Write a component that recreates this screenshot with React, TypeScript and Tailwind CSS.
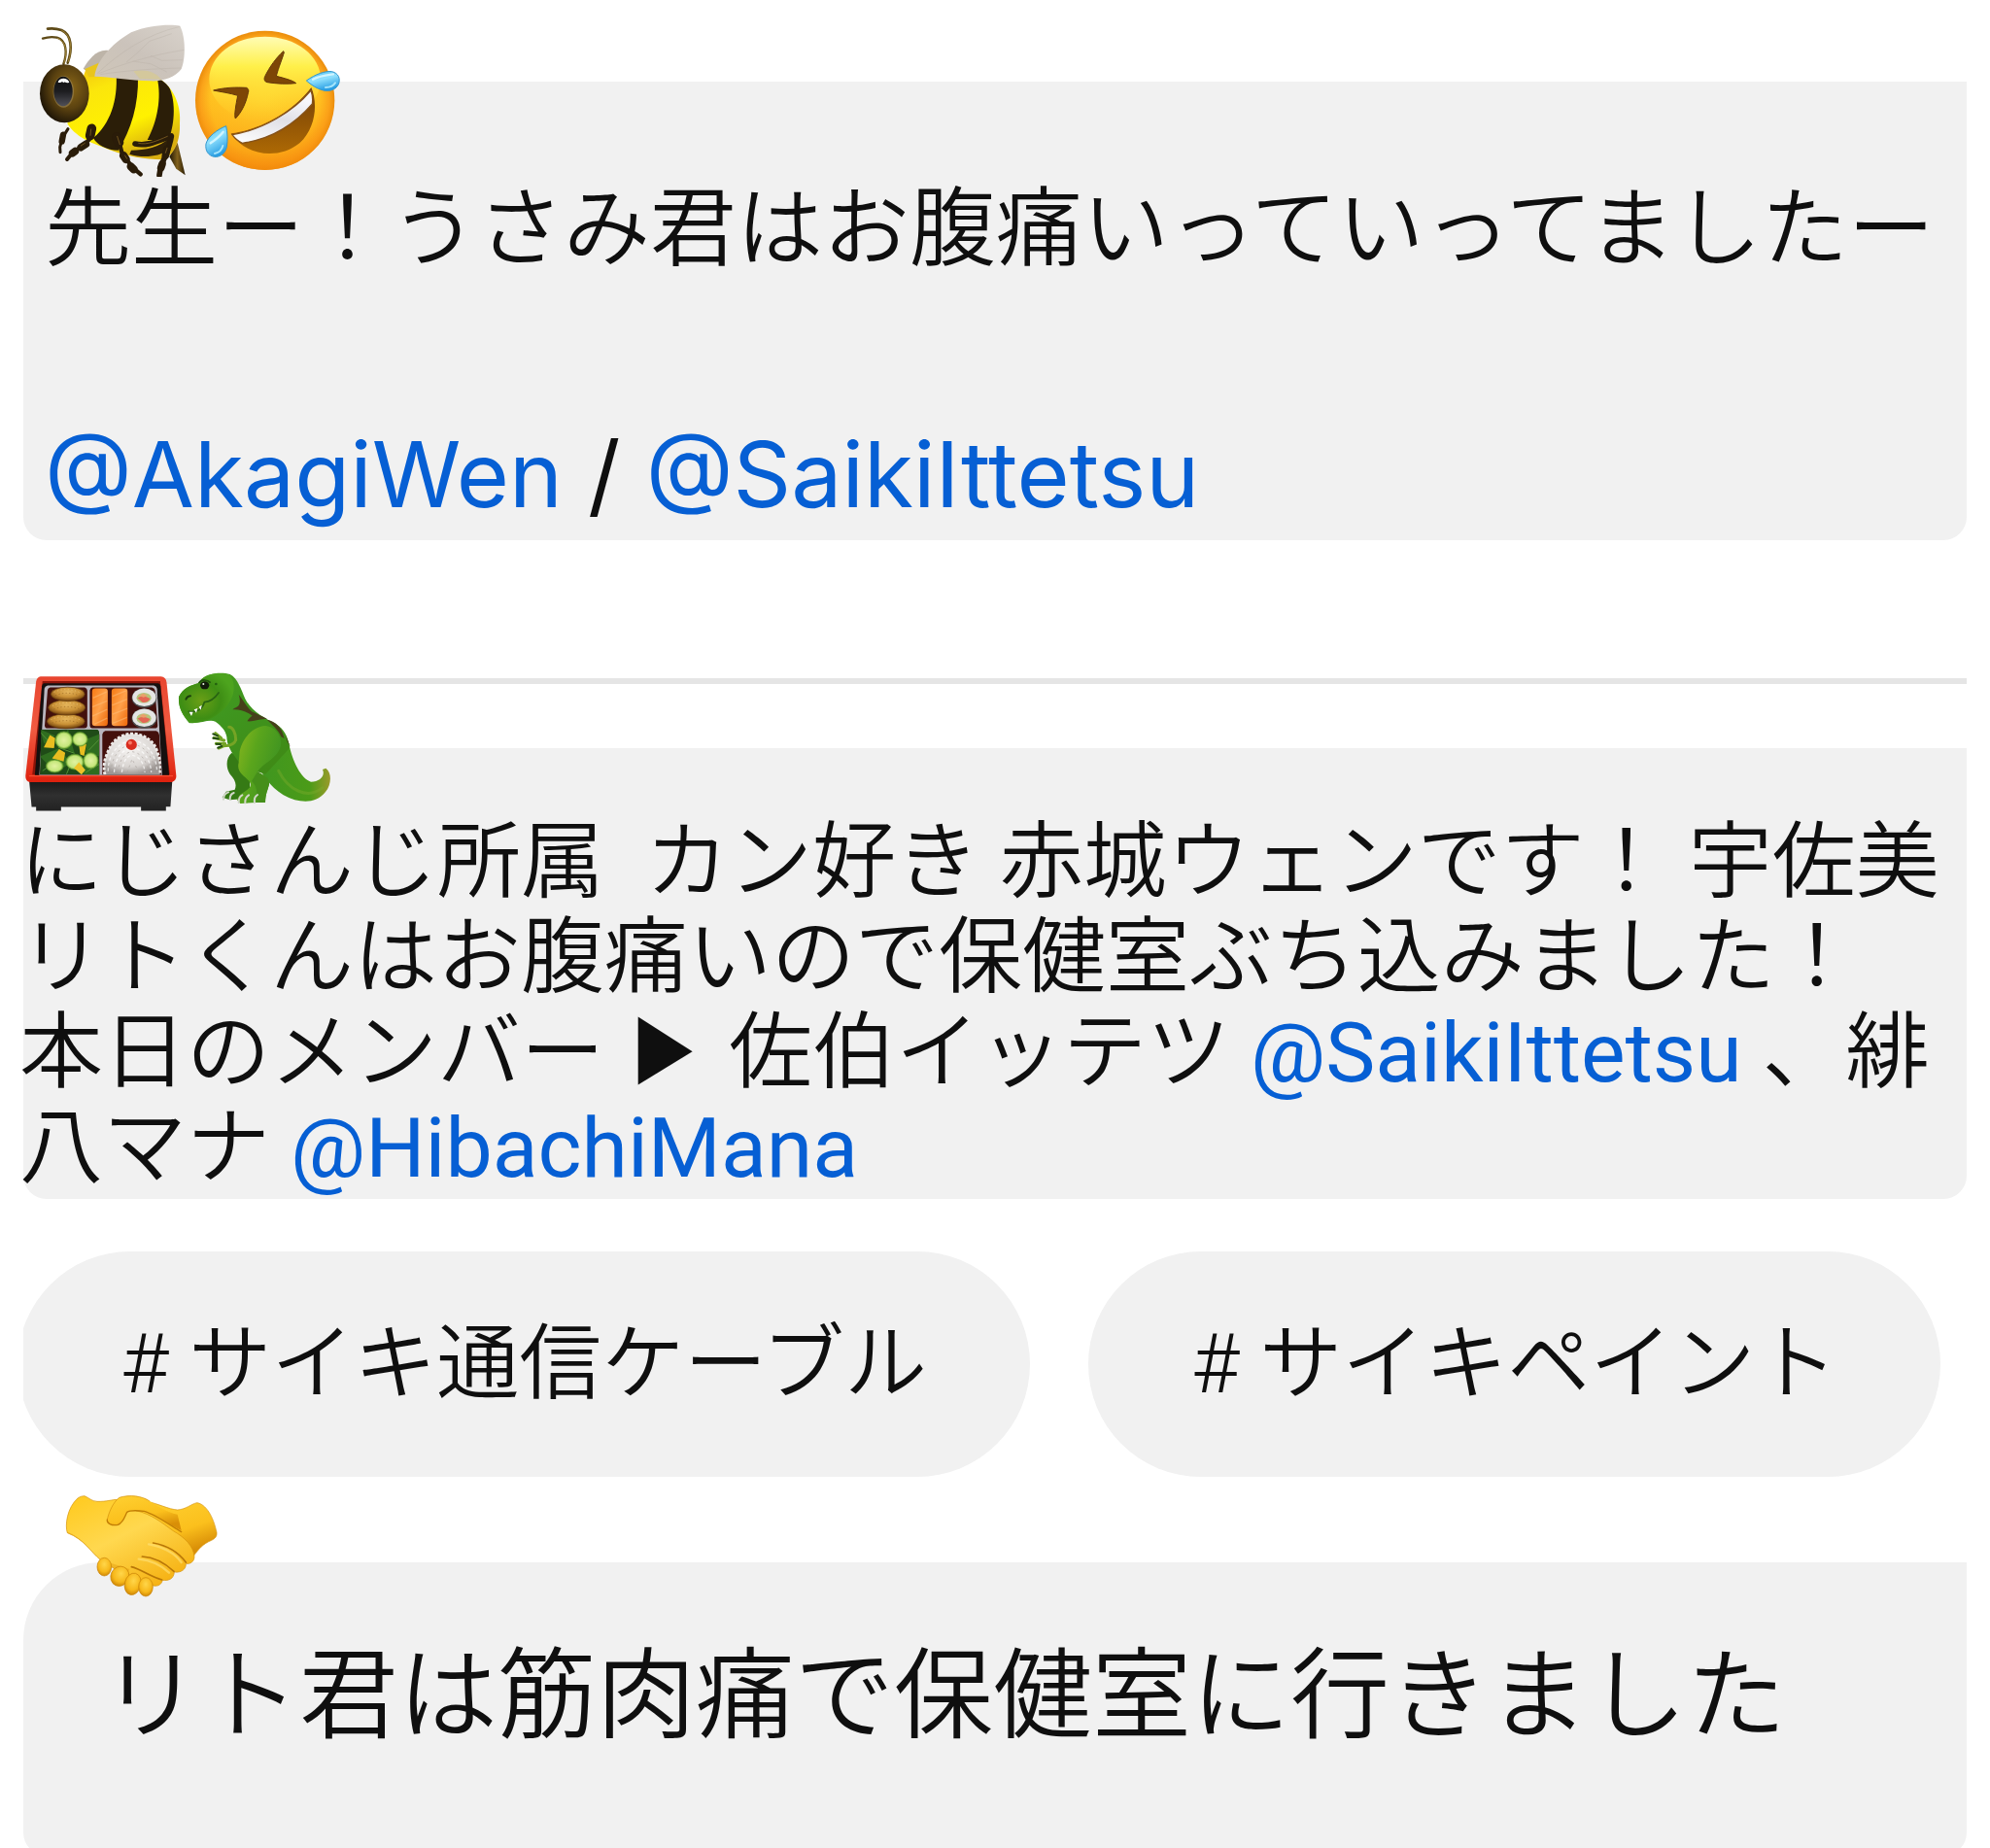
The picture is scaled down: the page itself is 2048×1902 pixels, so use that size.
import type { ReactNode } from "react";
import { clsx } from "clsx";

function BeeIcon({ className }: { className?: string }) {
  return (
    <svg viewBox="60 40 459 474" className={className} role="img" aria-label="ミツバチ">
      <defs>
        <radialGradient id="bee-head" cx="0.6" cy="0.4" r="0.65">
          <stop offset="0" stopColor="#8a6717" />
          <stop offset="0.55" stopColor="#5b4210" />
          <stop offset="1" stopColor="#1a1206" />
        </radialGradient>
        <linearGradient id="bee-body" x1="0" y1="0" x2="0.5" y2="1">
          <stop offset="0" stopColor="#f0bd10" />
          <stop offset="0.3" stopColor="#fbe60c" />
          <stop offset="0.7" stopColor="#fff200" />
          <stop offset="1" stopColor="#d9ae10" />
        </linearGradient>
        <linearGradient id="bee-wing" x1="0" y1="1" x2="1" y2="0">
          <stop offset="0" stopColor="#cfc6b8" />
          <stop offset="0.5" stopColor="#cbc3bb" />
          <stop offset="1" stopColor="#d8d2cb" />
        </linearGradient>
        <linearGradient id="bee-eye" x1="0" y1="0" x2="0" y2="1">
          <stop offset="0" stopColor="#101010" />
          <stop offset="0.5" stopColor="#1d1d20" />
          <stop offset="1" stopColor="#505058" />
        </linearGradient>
        <linearGradient id="bee-sting" x1="0" y1="0" x2="1" y2="0">
          <stop offset="0" stopColor="#1f1605" />
          <stop offset="0.5" stopColor="#80601c" />
          <stop offset="1" stopColor="#2b1e07" />
        </linearGradient>
        <clipPath id="bee-clip">
          <path d="M205 182C250 160 380 190 440 216C480 245 500 300 495 350C497 400 480 450 440 461C390 460 330 450 285 433C235 412 180 400 148 350Z" />
        </clipPath>
      </defs>
      <path d="M463 452L488 408L512 509L484 489Z" fill="url(#bee-sting)" />
      <path d="M205 182C250 160 380 190 440 216C480 245 500 300 495 350C497 400 480 450 440 461C390 460 330 450 285 433C235 412 180 400 148 350Z" fill="url(#bee-body)" />
      <g clipPath="url(#bee-clip)">
        <path d="M299 195L366 205C368 290 345 370 305 432C270 432 240 416 228 394C280 350 304 280 299 195Z" fill="#2b1e08" />
        <path d="M425 208L450 218C485 260 480 340 466 384C440 400 420 400 395 400C425 345 440 270 425 208Z" fill="#2b1e08" />
        <path d="M345 432C390 432 430 425 466 392L458 430C430 455 375 455 340 444Z" fill="#30210a" />
      </g>
      <path d="M197 180C215 150 240 118 275 124L300 175L230 205Z" fill="#bdb4a8" />
      <path d="M202 181L245 162L236 205L214 206Z" fill="#e9c51b" />
      <path d="M232 204C237 160 280 105 345 68C400 44 470 42 496 48C514 85 513 150 500 181C482 207 440 220 405 218C340 216 280 205 232 204Z" fill="url(#bee-wing)" />
      <path d="M352 188C390 180 420 190 438 213L372 212Z" fill="#d9cb88" opacity="0.6" />
      <g fill="none" stroke="#b0a79d" strokeWidth="2" opacity="0.4">
        <path d="M240 195C310 130 390 75 495 50" />
        <path d="M245 195C320 165 400 140 508 122" />
        <path d="M250 198C330 185 420 180 498 178" />
        <path d="M330 160L360 135L402 95L470 72M350 157L405 165L455 190M405 140L440 155L503 153" />
      </g>
      <g fill="none" strokeLinecap="round">
        <path d="M136 166C148 132 146 92 116 84C98 80 84 83 72 87" stroke="#5e4a17" strokeWidth="7" />
        <path d="M149 162C164 118 162 75 130 61C115 56 101 55 87 57" stroke="#5e4a17" strokeWidth="8" />
        <path d="M138 162C148 130 146 96 118 86M151 158C165 116 160 76 131 62" stroke="#a98b3a" strokeWidth="2.5" />
      </g>
      <ellipse cx="139" cy="257" rx="76" ry="90" fill="url(#bee-head)" />
      <ellipse cx="136" cy="251" rx="32" ry="49" fill="#9a8350" opacity="0.65" />
      <ellipse cx="135" cy="250" rx="29" ry="46" fill="url(#bee-eye)" />
      <path d="M119 222C122 207 149 206 154 222C143 227 139 218 136 224C132 216 127 227 119 222Z" fill="#fff" />
      <g fill="none" stroke="#2a1c09" strokeLinecap="round" strokeLinejoin="round">
        <path d="M150 366L133 393L125 422L126 438" strokeWidth="9" />
        <path d="M135 384L131 405" strokeWidth="19" />
        <path d="M228 373C221 403 197 417 165 438L147 460" strokeWidth="12" />
        <path d="M223 365L218 387" strokeWidth="29" />
        <path d="M205 413L190 423M172 435L164 441" strokeWidth="23" />
        <path d="M305 397L318 445L350 485L374 506" strokeWidth="13" />
        <path d="M300 391L307 408" strokeWidth="30" />
        <path d="M321 448L329 460M344 482L353 491" strokeWidth="25" />
        <path d="M357 412C395 420 422 405 469 388C464 425 446 457 436 485L432 509" strokeWidth="17" />
        <path d="M455 429L451 448M441 474L437 486" strokeWidth="23" />
      </g>
      <g fill="none" stroke="#806023" strokeWidth="3" strokeLinecap="round" opacity="0.8">
        <path d="M221 367L219 386M302 389L310 414M368 410C395 417 426 402 457 389M326 448L332 458M202 410L190 418M456 425L451 440" />
      </g>
    </svg>
  );
}

function RoflIcon({ className }: { className?: string }) {
  return (
    <svg viewBox="540 60 459 441" className={className} role="img" aria-label="大笑い">
      <defs>
        <radialGradient id="rofl-face" cx="0.5" cy="0.5" r="0.5">
          <stop offset="0" stopColor="#ffd52e" />
          <stop offset="0.78" stopColor="#ffc321" />
          <stop offset="0.92" stopColor="#fba41a" />
          <stop offset="1" stopColor="#ea8c0b" />
        </radialGradient>
        <linearGradient id="rofl-shine" x1="0" y1="0" x2="0" y2="1">
          <stop offset="0" stopColor="#fffcb5" />
          <stop offset="0.35" stopColor="#fff04a" />
          <stop offset="1" stopColor="#ffd42c" stopOpacity="0" />
        </linearGradient>
        <linearGradient id="rofl-low" x1="0" y1="0" x2="0" y2="1">
          <stop offset="0.45" stopColor="#ff9b13" stopOpacity="0" />
          <stop offset="1" stopColor="#f58a0b" stopOpacity="0.75" />
        </linearGradient>
        <linearGradient id="rofl-mouth" x1="0" y1="0" x2="0" y2="1">
          <stop offset="0" stopColor="#743f07" />
          <stop offset="1" stopColor="#ad6904" />
        </linearGradient>
        <linearGradient id="rofl-teeth" x1="0" y1="1" x2="0.4" y2="0">
          <stop offset="0" stopColor="#ffffff" />
          <stop offset="0.6" stopColor="#e0e0e6" />
          <stop offset="1" stopColor="#f7f7fa" />
        </linearGradient>
        <linearGradient id="rofl-tear" x1="0" y1="0" x2="0.4" y2="1">
          <stop offset="0" stopColor="#4bbdf0" />
          <stop offset="0.5" stopColor="#8fe0fd" />
          <stop offset="1" stopColor="#2a9fe4" />
        </linearGradient>
      </defs>
      <circle cx="761" cy="280" r="215" fill="url(#rofl-face)" />
      <circle cx="761" cy="280" r="215" fill="url(#rofl-low)" />
      <ellipse cx="761" cy="215" rx="172" ry="132" fill="url(#rofl-shine)" />
      <g fill="#7d4606" stroke="#65380a" strokeWidth="3" strokeLinejoin="round">
        <path d="M602 249C636 240 673 239 704 241C710 244 712 250 709 257C703 286 691 314 670 336C665 329 672 291 677 265C652 257 625 254 602 249Z" />
        <path d="M818 128C796 148 775 177 761 206C757 215 760 222 768 224C800 229 829 230 857 227C847 218 819 211 796 205C803 178 815 150 820 132Z" />
      </g>
      <path d="M656 382C752 370 850 312 904 240C925 290 918 365 868 412C801 466 700 450 656 382Z" fill="url(#rofl-mouth)" />
      <path d="M660 386C753 371 848 315 903 249C908 263 909 278 907 291C850 357 777 400 691 412C677 405 667 396 660 386Z" fill="url(#rofl-teeth)" stroke="#85521a" strokeWidth="4" />
      <path d="M889 219C917 199 947 188 968 191C988 196 994 212 989 228C982 246 962 254 941 249C920 244 903 231 889 219Z" fill="url(#rofl-tear)" stroke="#3397cf" strokeWidth="3" />
      <path d="M641 359C614 370 585 391 579 414C576 434 585 450 604 454C623 456 638 444 643 424C647 402 645 378 641 359Z" fill="url(#rofl-tear)" stroke="#3397cf" strokeWidth="3" />
      <path d="M909 215C930 204 951 202 972 199M632 377C621 391 606 403 593 412" fill="none" stroke="#d0f4ff" strokeWidth="7" strokeLinecap="round" />
      <path d="M948 240C964 240 973 235 978 226M606 444C620 441 628 433 631 420" fill="none" stroke="#bdf1ff" strokeWidth="6" strokeLinecap="round" opacity="0.8" />
    </svg>
  );
}

function BentoIcon({ className }: { className?: string }) {
  return (
    <svg viewBox="10 40 480 435" className={className} role="img" aria-label="弁当">
      <defs>
        <linearGradient id="bento-rim" x1="0" y1="0" x2="0" y2="1">
          <stop offset="0" stopColor="#e8452f" />
          <stop offset="0.5" stopColor="#f05a41" />
          <stop offset="1" stopColor="#de210e" />
        </linearGradient>
        <linearGradient id="bento-base" x1="0" y1="0" x2="0" y2="1">
          <stop offset="0" stopColor="#171717" />
          <stop offset="0.5" stopColor="#303030" />
          <stop offset="1" stopColor="#222" />
        </linearGradient>
        <linearGradient id="bento-salmon" x1="0" y1="0" x2="1" y2="1">
          <stop offset="0" stopColor="#f77a13" />
          <stop offset="0.5" stopColor="#ffa14b" />
          <stop offset="1" stopColor="#ed6707" />
        </linearGradient>
        <radialGradient id="bento-fry" cx="0.5" cy="0.35" r="0.6">
          <stop offset="0" stopColor="#e6b65c" />
          <stop offset="0.6" stopColor="#c99035" />
          <stop offset="1" stopColor="#7c4b12" />
        </radialGradient>
        <radialGradient id="bento-cucumber" cx="0.5" cy="0.5" r="0.5">
          <stop offset="0" stopColor="#e2f2a1" />
          <stop offset="0.75" stopColor="#c5e77c" />
          <stop offset="1" stopColor="#6fa832" />
        </radialGradient>
        <radialGradient id="bento-rice" cx="0.45" cy="0.35" r="0.65">
          <stop offset="0" stopColor="#f7f5f3" />
          <stop offset="0.7" stopColor="#d9d5d2" />
          <stop offset="1" stopColor="#9c9693" />
        </radialGradient>
        <clipPath id="bento-greens">
          <path d="M66 215H240Q248 218 248 230V357H62Z" />
        </clipPath>
        <clipPath id="bento-bowl">
          <rect x="257" y="218" width="184" height="139" />
        </clipPath>
      </defs>
      <path d="M28 372H476L470 457H456V470H378V458H128V470H50V458H36Z" fill="url(#bento-base)" />
      <path d="M64 50H440Q456 52 458 68L488 360Q489 376 474 380H30Q16 378 17 360L50 66Q52 52 64 50Z" fill="url(#bento-rim)" />
      <path d="M70 64H438L468 357H38Z" fill="#8e1409" />
      <path d="M74 71H432Q438 73 439 80L466 358H46L68 80Q69 73 74 71Z" fill="#15100f" />
      <path d="M86 78H418Q427 80 428 88L444 358H60L76 88Q77 80 86 78Z" fill="#bab6bf" />
      <path d="M94 84H202Q210 86 210 94V205Q209 212 201 212H82Q76 209 77 202L86 92Q87 86 94 84ZM226 84H412Q421 86 422 94L430 204Q429 212 421 212H225Q218 210 218 203V93Q219 86 226 84ZM80 220H240Q248 223 248 232V357H62L70 230Q72 222 80 220ZM266 220H426Q434 223 435 232L442 357H257V231Q259 222 266 220Z" fill="#43100c" />
      <g fill="url(#bento-fry)" stroke="#5c340b" strokeWidth="2">
        <ellipse cx="143" cy="190" rx="59" ry="23" />
        <ellipse cx="146" cy="147" rx="58" ry="24" />
        <ellipse cx="149" cy="105" rx="53" ry="22" />
      </g>
      <g fill="none" stroke="#efcf82" strokeWidth="3" strokeDasharray="4 7" opacity="0.6">
        <path d="M106 99C130 87 165 88 191 102M101 142C130 127 170 130 195 144M96 185C126 170 166 173 192 188" />
        <path d="M110 109C140 98 160 100 186 110M105 152C138 140 162 143 190 153M100 195C132 184 162 186 188 197" stroke="#96631f" />
      </g>
      <rect x="225" y="87" width="49" height="118" rx="10" fill="url(#bento-salmon)" />
      <rect x="286" y="87" width="50" height="118" rx="10" fill="url(#bento-salmon)" />
      <path d="M228 117L270 98M226 145L272 126M226 174L272 153M232 199L272 180M289 112L331 94M288 140L334 121M289 168L335 150M290 196L334 178" stroke="#ffc07c" strokeWidth="4" opacity="0.5" />
      {[117, 181].map((cy) => (
        <g key={cy}>
          <ellipse cx="388" cy={cy} rx="39" ry="31" fill="#4a4c4b" />
          <ellipse cx="388" cy={cy - 2} rx="37" ry="28" fill="#e5e5e3" />
          <ellipse cx="387" cy={cy} rx="23" ry="16" fill="#b4c57a" />
          <path d={`M367 ${cy}Q386 ${cy - 10} 406 ${cy + 2}Q400 ${cy + 15} 383 ${cy + 14}Z`} fill="#e46654" />
          <path d={`M372 ${cy - 7}L384 ${cy - 14}L399 ${cy - 8}L386 ${cy - 2}Z`} fill="#e9a06c" />
        </g>
      ))}
      <g clipPath="url(#bento-greens)">
        <path d="M60 215H248V358H60Z" fill="#1f4b17" />
        <g fill="#2f6d1f">
          <path d="M62 215L110 235L75 260ZM150 215L170 290L120 260ZM210 245L248 230V300L205 290ZM62 300L120 275L160 320L110 350ZM190 320L248 320V358H200Z" />
        </g>
        <g fill="none" stroke="#559339" strokeWidth="3">
          <path d="M64 225L105 270M120 272L170 290M215 280L246 248M70 345L132 302M205 350L246 325M145 355L160 320" />
        </g>
      </g>
      <g fill="#e8bd20">
        <path d="M93 233L110 243L106 274L74 272ZM122 277L141 288L136 316L100 306ZM183 258L207 262L200 298L188 294Z" />
      </g>
      <g fill="url(#bento-cucumber)" stroke="#5c962b" strokeWidth="2">
        <circle cx="137" cy="249" r="27" />
        <ellipse cx="187" cy="246" rx="24" ry="22" />
        <ellipse cx="108" cy="330" rx="27" ry="20" />
        <ellipse cx="171" cy="317" rx="28" ry="24" />
        <ellipse cx="221" cy="313" rx="23" ry="25" />
      </g>
      <path d="M184 318L204 342L192 357L168 336Z" fill="#edc32b" />
      <g clipPath="url(#bento-bowl)">
        <path d="M265 357C256 320 272 290 281 272C294 244 324 229 350 229C384 229 416 249 427 280C437 308 442 330 437 357Z" fill="url(#bento-rice)" />
        <path d="M265 357C256 320 272 290 281 272C294 244 324 229 350 229C384 229 416 249 427 280C437 308 442 330 437 357" fill="none" stroke="#edeae8" strokeWidth="9" strokeDasharray="9 5" />
        <g fill="none" stroke="#fff" strokeWidth="4" strokeDasharray="10 7" opacity="0.7">
          <path d="M275 346C275 285 316 252 350 250C392 252 426 290 428 348M294 350C296 301 323 277 350 273C382 275 408 307 410 350M318 350C322 316 333 298 350 296C372 299 387 319 390 350" />
        </g>
        <g fill="none" stroke="#aca5a1" strokeWidth="2" strokeDasharray="7 10">
          <path d="M284 348C286 292 322 264 350 262C388 264 417 300 420 350M306 350C310 308 330 286 350 285C377 288 397 312 400 350M335 350L350 308L372 350" />
        </g>
      </g>
      <circle cx="348" cy="263" r="17" fill="#d92d1f" />
      <circle cx="344" cy="257" r="6" fill="#f77866" />
      <path d="M28 361H478" stroke="#ff5638" strokeWidth="3" />
    </svg>
  );
}

function TrexIcon({ className }: { className?: string }) {
  return (
    <svg viewBox="486 30 480 414" className={className} role="img" aria-label="ティラノサウルス">
      <defs>
        <linearGradient id="trex-body" x1="0" y1="0" x2="0.8" y2="1">
          <stop offset="0" stopColor="#4b9d1c" />
          <stop offset="0.45" stopColor="#3f961f" />
          <stop offset="1" stopColor="#3f8a16" />
        </linearGradient>
        <radialGradient id="trex-head" cx="0.4" cy="0.55" r="0.6">
          <stop offset="0" stopColor="#6a9f16" />
          <stop offset="0.6" stopColor="#3e8e14" />
          <stop offset="1" stopColor="#4da41e" />
        </radialGradient>
        <linearGradient id="trex-thigh" x1="0" y1="0" x2="1" y2="0.5">
          <stop offset="0" stopColor="#8cb81e" />
          <stop offset="0.45" stopColor="#5aa51c" />
          <stop offset="1" stopColor="#3d9222" />
        </linearGradient>
        <linearGradient id="trex-tail" x1="0" y1="0" x2="1" y2="0">
          <stop offset="0" stopColor="#3f9620" />
          <stop offset="0.7" stopColor="#4b9b18" />
          <stop offset="1" stopColor="#9a9b2a" />
        </linearGradient>
      </defs>
      <path d="M655 285C637 300 637 330 650 350C665 367 672 380 665 398L638 404L626 422L650 430L706 425C716 394 709 370 713 340L720 300Z" fill="#357a15" />
      <path d="M765 190C800 195 820 225 832 256C842 310 870 365 900 374C928 374 945 356 936 336L946 332C965 345 964 382 945 405C920 437 885 438 850 430C800 416 765 375 745 340Z" fill="url(#trex-tail)" />
      <path d="M560 60C575 40 620 34 650 42C674 54 685 90 697 118C715 155 760 180 792 195C830 220 832 258 834 270L760 350L690 330L655 282C650 270 641 262 640 235C636 215 625 203 605 188C585 180 560 195 524 192C505 170 490 145 492 112C504 85 530 75 552 70Z" fill="url(#trex-body)" />
      <path d="M560 60C580 38 622 34 650 45C668 68 668 110 636 145C613 166 592 190 526 193C504 170 490 145 492 112C504 85 532 75 551 70Z" fill="url(#trex-head)" />
      <path d="M677 104C690 120 701 142 717 157C736 166 750 171 766 181C742 177 724 190 703 187C708 179 713 173 719 170C700 155 675 149 658 151C667 142 689 146 677 104ZM764 182C790 187 808 206 813 225L818 240L808 235C803 220 790 206 764 182ZM822 230L837 268L827 250Z" fill="#46401b" />
      <path d="M680 280C688 240 720 203 760 201C800 205 818 250 801 278C787 304 752 318 735 342C747 352 773 360 771 382C766 402 760 410 759 438L730 438L682 441L672 430L681 414C700 400 716 393 714 380C704 358 668 350 677 315Z" fill="url(#trex-thigh)" />
      <path d="M735 343C755 355 774 361 771 382C766 402 760 410 759 438H731C736 408 734 388 717 372Z" fill="#458f1a" />
      <path d="M647 205C659 205 668 224 668 244C664 260 648 263 632 263L615 270M632 246L601 238M623 239L605 224M635 256L607 256" fill="none" stroke="#75a425" strokeWidth="9" strokeLinecap="round" />
      <path d="M598 226L612 232M598 239L614 241M608 257L621 258M613 269L625 264" stroke="#234b13" strokeWidth="6" strokeLinecap="round" />
      <path d="M523 157C548 161 565 149 571 128C585 127 602 118 615 99" fill="none" stroke="#286312" strokeWidth="5" strokeLinecap="round" />
      <path d="M524 158L531 171L536 158ZM539 151L546 161L550 147ZM554 143L560 152L563 137Z" fill="#fff" />
      <ellipse cx="572" cy="76" rx="14" ry="12" fill="#111a0b" />
      <circle cx="568" cy="72" r="3" fill="#e8f7e0" />
      <path d="M554 69C563 56 580 58 590 68" fill="none" stroke="#204f0e" strokeWidth="5" />
      <path d="M514 119C517 112 522 109 528 109" fill="none" stroke="#1b3f0d" strokeWidth="6" strokeLinecap="round" />
      <circle cx="607" cy="72" r="4" fill="#23600f" />
      <g fill="none" stroke="#d1d6c8" strokeWidth="6" strokeLinecap="round">
        <path d="M630 428C630 417 636 409 645 406M650 428C650 417 655 410 662 408M677 438C677 427 681 418 688 415M697 439C696 428 700 420 708 415M726 438C724 426 728 418 735 414" />
      </g>
      <path d="M800 340C830 400 890 430 936 392" fill="none" stroke="#80ad2c" strokeWidth="9" strokeLinecap="round" opacity="0.4" />
    </svg>
  );
}

function HandshakeIcon({ className }: { className?: string }) {
  return (
    <svg viewBox="48 48 480 327" className={className} role="img" aria-label="握手">
      <defs>
        <linearGradient id="shake-left" x1="0" y1="0" x2="0.7" y2="1">
          <stop offset="0" stopColor="#ffc91c" />
          <stop offset="0.5" stopColor="#ffd84f" />
          <stop offset="1" stopColor="#f6b315" />
        </linearGradient>
        <linearGradient id="shake-right" x1="0" y1="0" x2="0.5" y2="1">
          <stop offset="0" stopColor="#ffd132" />
          <stop offset="0.65" stopColor="#fbc01d" />
          <stop offset="1" stopColor="#d98f07" />
        </linearGradient>
        <radialGradient id="shake-tip" cx="0.5" cy="0.35" r="0.65">
          <stop offset="0" stopColor="#ffd64a" />
          <stop offset="0.65" stopColor="#f7b81a" />
          <stop offset="1" stopColor="#cf8707" />
        </radialGradient>
      </defs>
      <path d="M300 75C340 83 370 100 398 102C425 100 440 84 458 80C485 84 508 120 519 172C520 184 515 190 503 196C475 208 465 222 448 244L380 220L270 110Z" fill="url(#shake-right)" stroke="#d5930c" strokeWidth="2" />
      <path d="M111 59C126 65 132 75 150 76C178 77 195 70 215 70L270 104C320 116 350 142 385 167C420 187 447 213 450 246C450 262 438 270 424 268C425 285 410 297 388 294C387 315 370 322 352 319C348 335 334 340 320 335L245 310L160 256C130 232 112 194 58 173C50 150 57 95 90 66C97 61 104 59 111 59Z" fill="url(#shake-left)" stroke="#d5930c" strokeWidth="2" />
      <path d="M58 170C98 184 123 220 151 250C178 267 210 270 250 285L240 310L158 256C128 230 110 194 58 173Z" fill="#e39d10" opacity="0.45" />
      <path d="M181 132C186 110 198 80 218 64C250 54 290 59 312 75C340 92 363 109 398 116L410 166C360 140 325 113 295 106C276 104 252 102 242 109C235 122 232 140 214 148C195 152 179 143 181 132Z" fill="url(#shake-right)" />
      <path d="M181 132C179 143 195 152 214 148C232 140 235 122 242 109C252 102 276 104 295 106C330 116 372 147 410 170" fill="none" stroke="#c27e05" strokeWidth="4" strokeLinecap="round" />
      <path d="M181 132C186 110 198 80 218 64C250 54 290 59 312 75" fill="none" stroke="#d18e0c" strokeWidth="2" />
      <g fill="none" stroke="#b87607" strokeWidth="5" strokeLinecap="round">
        <path d="M323 204C363 211 398 229 424 264" />
        <path d="M289 246C328 248 360 267 387 292" />
        <path d="M256 278C285 285 315 309 350 318" />
      </g>
      <path d="M309 208C360 218 390 235 410 264M278 254C320 258 350 275 372 296" fill="none" stroke="#ffe37a" strokeWidth="7" strokeLinecap="round" opacity="0.6" />
      <g fill="url(#shake-tip)" stroke="#c98408" strokeWidth="2">
        <ellipse cx="172" cy="278" rx="22" ry="28" />
        <ellipse cx="220" cy="307" rx="28" ry="31" transform="rotate(25 220 307)" />
        <ellipse cx="260" cy="331" rx="25" ry="34" transform="rotate(14 260 331)" />
        <ellipse cx="300" cy="340" rx="22" ry="29" />
      </g>
    </svg>
  );
}

function Mention({ name, className }: { name: string; className?: string }) {
  return (
    <a href={`#${name}`} className={clsx("text-[#065fd4]", className)}>
      @{name}
    </a>
  );
}

function Card({ className, children }: { className?: string; children: ReactNode }) {
  return <section className={clsx("relative rounded-b-3xl bg-[#f1f1f1]", className)}>{children}</section>;
}

const tags = ["サイキ通信ケーブル", "サイキペイント"];

export default function App() {
  return (
    <main
      lang="ja"
      className="h-screen overflow-hidden bg-white px-6 pt-[84px] font-['Roboto','Noto_Sans_CJK_JP',sans-serif] font-[350] text-[#0f0f0f]"
    >
      <Card className="px-[22px] pt-[88px] text-[89px] leading-[128px]">
        <div className="absolute -top-15 left-4 flex items-start gap-1.5">
          <BeeIcon className="w-[153px]" />
          <RoflIcon className="mt-1.5 w-[153px]" />
        </div>
        <p className="whitespace-nowrap">先生ー！うさみ君はお腹痛いっていってましたー</p>
        <p className="mt-31 pb-1 font-['Inter','Noto_Sans_CJK_JP',sans-serif] text-[93px] leading-[128px] font-normal">
          <Mention name="AkagiWen" /> / <Mention name="SaikiIttetsu" />
        </p>
      </Card>

      <hr className="mt-[142px] border-t-[6px] border-[#e5e5e5]" />

      <Card className="mt-[66px] pt-[69px] pb-[3px] text-[86px] leading-[98px]">
        <div className="absolute -top-20 left-0 flex items-start">
          <BentoIcon className="mt-[3px] w-[158px]" />
          <TrexIcon className="w-[160px]" />
        </div>
        <p className="-ml-1 whitespace-pre">
          {"にじさんじ所属  カン好き 赤城ウェンです！ 宇佐美\nリトくんはお腹痛いので保健室ぶち込みました！\n本日のメンバー "}
          <span className="font-['DejaVu_Sans'] leading-none">▶</span>
          {" 佐伯イッテツ "}
          <Mention name="SaikiIttetsu" className="font-normal" />
          {" 、緋\n八マナ "}
          <Mention name="HibachiMana" className="font-normal" />
        </p>
      </Card>

      <div className="mt-[54px] flex gap-15 overflow-hidden text-[85px] leading-[232px]">
        {tags.map((tag) => (
          <a key={tag} href={`#${tag}`} className="rounded-full bg-[#f1f1f1] px-[106px] whitespace-nowrap first:-ml-1.5">
            # {tag}
          </a>
        ))}
      </div>

      <Card className="mt-[88px] rounded-tl-[80px] px-20 pt-[65px] pb-[91px] text-[102px] leading-[146px]">
        <HandshakeIcon className="absolute -top-18 left-[42px] w-[160px]" />
        <p className="whitespace-nowrap">リト君は筋肉痛で保健室に行きました</p>
      </Card>
    </main>
  );
}
